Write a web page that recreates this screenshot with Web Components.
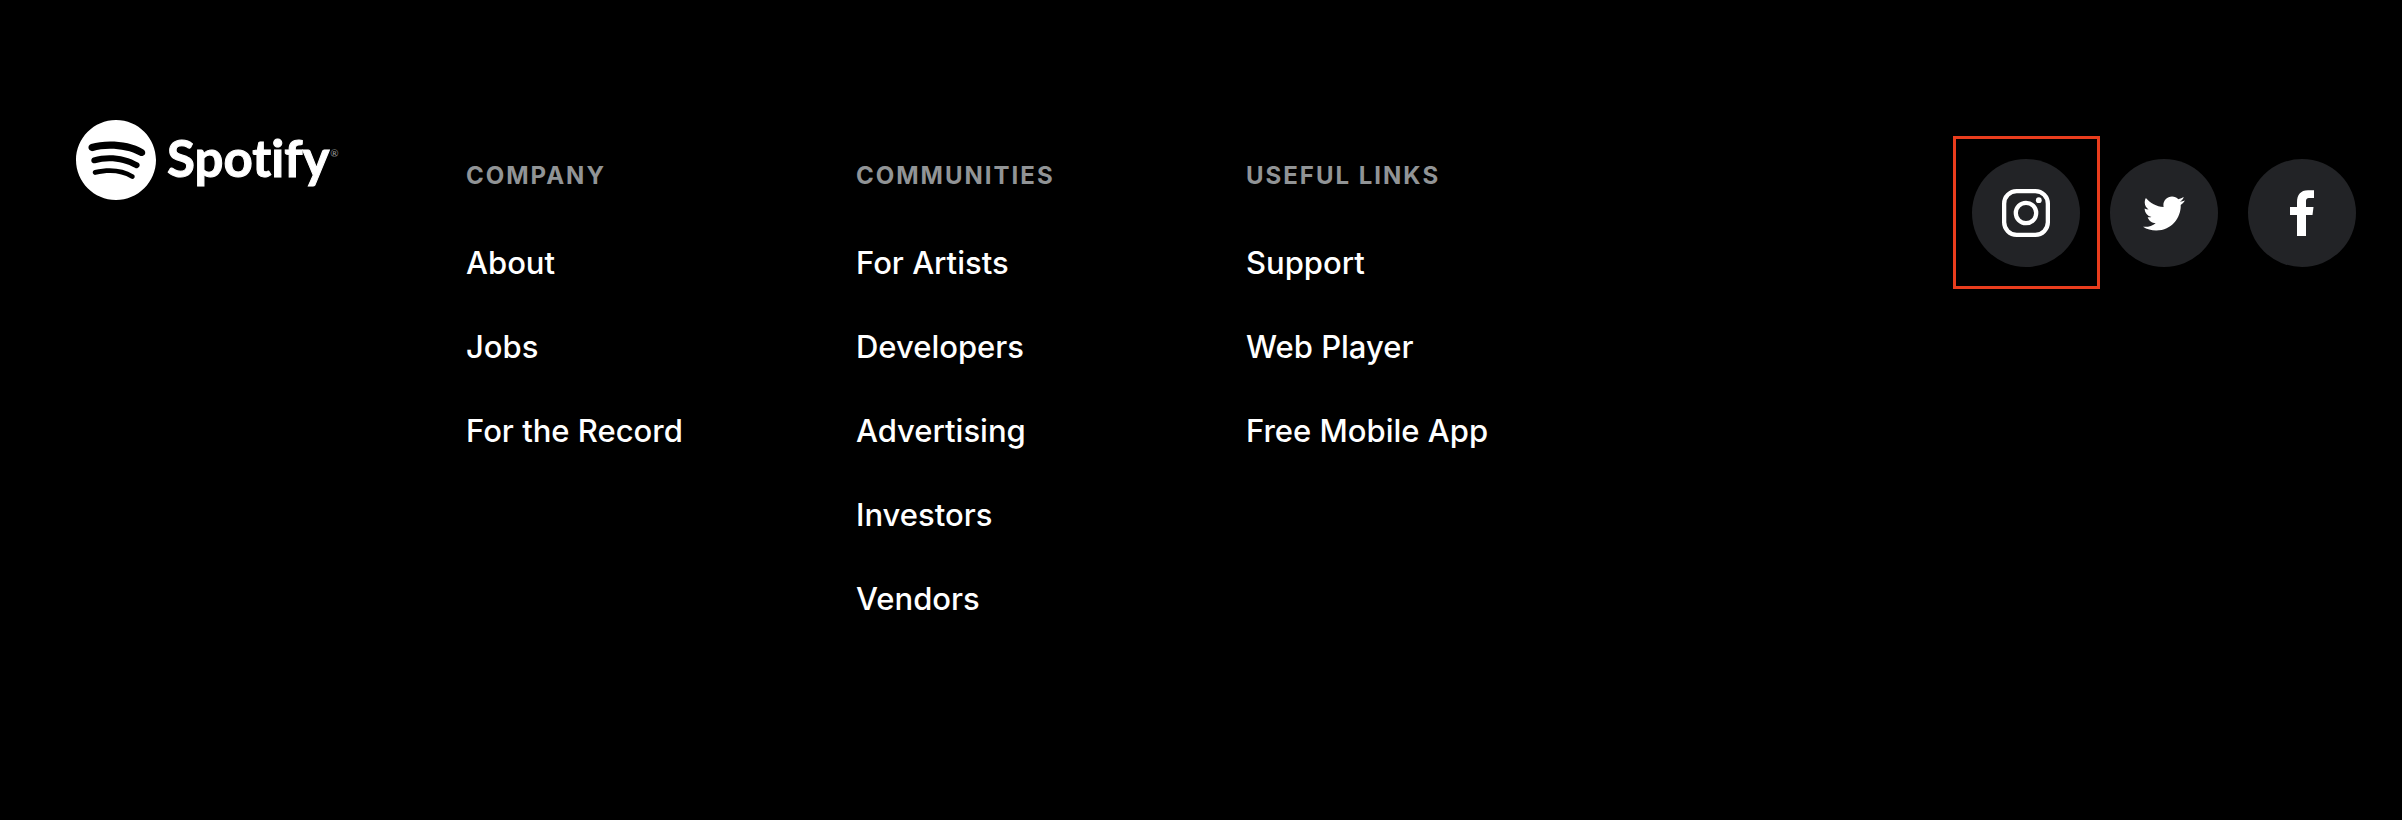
<!DOCTYPE html>
<html lang="en">
<head>
<meta charset="utf-8">
<title>Spotify footer</title>
<style>
  body { margin: 0; background: #000; color: #fff; font-family: Inter, "Liberation Sans", sans-serif; }
</style>
</head>
<body>
<site-footer>
  <brand-logo slot="brand"></brand-logo>
  <link-column>
    <span slot="heading">Company</span>
    <footer-link>About</footer-link>
    <footer-link>Jobs</footer-link>
    <footer-link>For the Record</footer-link>
  </link-column>
  <link-column>
    <span slot="heading">Communities</span>
    <footer-link>For Artists</footer-link>
    <footer-link>Developers</footer-link>
    <footer-link>Advertising</footer-link>
    <footer-link>Investors</footer-link>
    <footer-link>Vendors</footer-link>
  </link-column>
  <link-column>
    <span slot="heading">Useful links</span>
    <footer-link>Support</footer-link>
    <footer-link>Web Player</footer-link>
    <footer-link>Free Mobile App</footer-link>
  </link-column>
  <social-link slot="social" label="Instagram" highlighted>
    <svg width="48" height="48" viewBox="0 0 48 48" fill="none" stroke="#fff" aria-hidden="true">
      <rect x="2.150" y="2.150" width="43.700" height="43.700" rx="12.500" stroke-width="4.3"/>
      <circle cx="24" cy="24" r="10.200" stroke-width="4.3"/>
      <circle cx="36.8" cy="11.2" r="2.9" fill="#fff" stroke="none"/>
    </svg>
  </social-link>
  <social-link slot="social" label="Twitter">
    <svg width="42" height="35" viewBox="0 2.2 24 19.6" fill="#fff" aria-hidden="true">
      <path d="M23.954 4.569c-.885.389-1.83.654-2.825.775 1.014-.611 1.794-1.574 2.163-2.723-.951.555-2.005.959-3.127 1.184-.896-.959-2.173-1.559-3.591-1.559-2.717 0-4.92 2.203-4.92 4.917 0 .39.045.765.127 1.124C7.691 8.094 4.066 6.13 1.64 3.161c-.427.722-.666 1.561-.666 2.475 0 1.71.87 3.213 2.188 4.096-.807-.026-1.566-.248-2.228-.616v.061c0 2.385 1.693 4.374 3.946 4.827-.413.111-.849.171-1.296.171-.314 0-.615-.03-.916-.086.631 1.953 2.445 3.377 4.604 3.417-1.68 1.319-3.809 2.105-6.102 2.105-.39 0-.779-.023-1.17-.067 2.189 1.394 4.768 2.209 7.557 2.209 9.054 0 13.999-7.496 13.999-13.986 0-.209 0-.42-.015-.63.961-.689 1.8-1.56 2.46-2.548l-.047-.02z"/>
    </svg>
  </social-link>
  <social-link slot="social" label="Facebook">
    <svg width="24" height="46" viewBox="0 0 24 46" fill="#fff" aria-hidden="true">
      <path d="M7 46V25H0v-8h7v-4.600C7 5 10.500.300 18 .300h6V8h-4.200C16.500 8 16 9.300 16 12v5h7.500l-1 8H16v21z"/>
    </svg>
  </social-link>
</site-footer>

<template id="site-footer-template">
  <style>
    :host { display: block; }
    footer {
      display: grid;
      grid-template-columns: repeat(6, minmax(0, 1fr));
      column-gap: 60px;
      padding: 120px 46px 176px 76px;
    }
    nav {
      grid-column: span 3;
      display: grid;
      grid-template-columns: repeat(3, minmax(0, 1fr));
      column-gap: 60px;
      padding-top: 40px;
    }
    .social {
      grid-column: span 2;
      display: flex;
      justify-content: flex-end;
      align-items: flex-start;
      gap: 30px;
      padding-top: 39px;
    }
  </style>
  <footer>
    <slot name="brand"></slot>
    <nav aria-label="Footer"><slot></slot></nav>
    <div class="social"><slot name="social"></slot></div>
  </footer>
</template>

<template id="brand-logo-template">
  <style>
    :host { display: block; }
    a { display: flex; align-items: center; height: 80px; gap: 11px; color: inherit; text-decoration: none; }
    svg { flex: none; }
    .name { font: 700 51px/76px Lato, "Liberation Sans", sans-serif; font-variant-ligatures: none; -webkit-text-stroke: 1px #fff; padding-bottom: 4px; }
    sup { font: 400 10px/10px Lato, "Liberation Sans", sans-serif; align-self: flex-start; margin: 28px 0 0 -10px; color: #999; }
  </style>
  <a href="#">
    <svg width="80" height="80" viewBox="0 0 24 24" fill="#fff" aria-hidden="true">
      <path d="M12 0C5.4 0 0 5.4 0 12s5.4 12 12 12 12-5.4 12-12S18.66 0 12 0zm5.521 17.34c-.24.359-.66.48-1.021.24-2.82-1.74-6.36-2.101-10.561-1.141-.418.122-.779-.179-.899-.539-.12-.421.18-.78.54-.9 4.56-1.021 8.52-.6 11.64 1.32.42.18.479.659.301 1.02zm1.44-3.3c-.301.42-.841.6-1.262.3-3.239-1.98-8.159-2.58-11.939-1.38-.479.12-1.02-.12-1.14-.6-.12-.48.12-1.021.6-1.141C9.6 9.9 15 10.561 18.72 12.84c.361.181.54.78.241 1.2zm.12-3.36C15.24 8.4 8.82 8.16 5.16 9.301c-.6.179-1.2-.181-1.38-.721-.18-.601.18-1.2.72-1.381 4.26-1.26 11.28-1.02 15.721 1.621.539.3.719 1.02.419 1.56-.299.421-1.02.599-1.559.3z"/>
    </svg>
    <span class="name">Spotify</span><sup>®</sup>
  </a>
</template>

<template id="link-column-template">
  <style>
    :host { display: block; }
    h2 { margin: 0 0 44px; font-size: 24px; line-height: 32px; font-weight: 700; letter-spacing: 2px; text-transform: uppercase; color: #919496; }
    div { display: flex; flex-direction: column; gap: 30px; }
  </style>
  <h2><slot name="heading"></slot></h2>
  <div><slot></slot></div>
</template>

<template id="footer-link-template">
  <style>
    :host { display: block; line-height: 54px; font-size: 31px; font-weight: 500; white-space: nowrap; }
    a { color: #fff; text-decoration: none; }
  </style>
  <a href="#"><slot></slot></a>
</template>

<template id="social-link-template">
  <style>
    :host { display: block; position: relative; flex: none; }
    a { display: flex; align-items: center; justify-content: center; width: 108px; height: 108px; border-radius: 50%; background: #222326; }
    :host([highlighted])::after { content: ""; position: absolute; inset: -23px -20px -22px -19px; border: 3px solid #e93d1d; pointer-events: none; }
  </style>
  <a href="#"><slot></slot></a>
</template>

<script>
  class TemplateElement extends HTMLElement {
    constructor() {
      super();
      const template = document.getElementById(this.localName + "-template");
      this.attachShadow({ mode: "open" }).append(template.content.cloneNode(true));
    }
  }
  class SiteFooter extends TemplateElement {}
  class BrandLogo extends TemplateElement {
    connectedCallback() { this.shadowRoot.querySelector("a").setAttribute("aria-label", "Spotify"); }
  }
  class LinkColumn extends TemplateElement {}
  class FooterLink extends TemplateElement {}
  class SocialLink extends TemplateElement {
    connectedCallback() { this.shadowRoot.querySelector("a").setAttribute("aria-label", this.getAttribute("label")); }
  }
  customElements.define("site-footer", SiteFooter);
  customElements.define("brand-logo", BrandLogo);
  customElements.define("link-column", LinkColumn);
  customElements.define("footer-link", FooterLink);
  customElements.define("social-link", SocialLink);
</script>
</body>
</html>
